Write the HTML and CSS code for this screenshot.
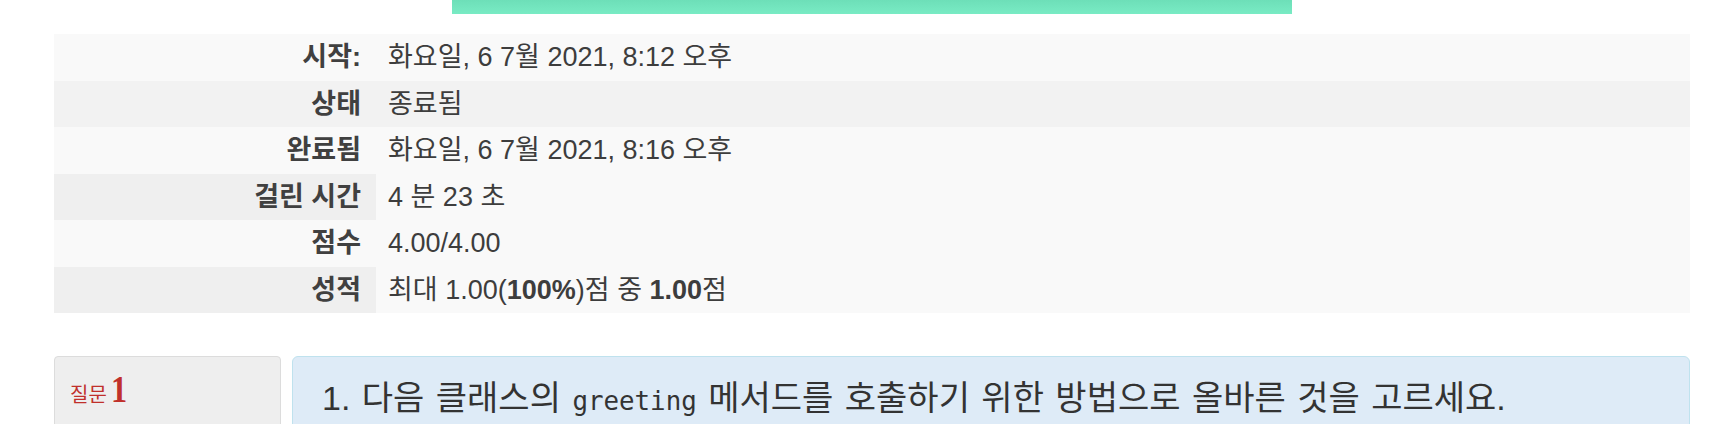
FILE: index.html
```html
<!DOCTYPE html>
<html lang="ko">
<head>
<meta charset="utf-8">
<title>퀴즈 검토</title>
<link rel="stylesheet" href="styles.css">
</head>
<body>
<div class="page">
  <div class="banner"></div>
  <table class="summary">
    <tbody>
      <tr class="r-light">
        <th>시작:</th>
        <td>화요일, 6 7월 2021, 8:12 오후</td>
      </tr>
      <tr class="r-mid">
        <th>상태</th>
        <td>종료됨</td>
      </tr>
      <tr class="r-light">
        <th>완료됨</th>
        <td>화요일, 6 7월 2021, 8:16 오후</td>
      </tr>
      <tr class="r-head">
        <th>걸린 시간</th>
        <td>4 분 23 초</td>
      </tr>
      <tr class="r-light">
        <th>점수</th>
        <td>4.00/4.00</td>
      </tr>
      <tr class="r-head">
        <th>성적</th>
        <td>최대 1.00(<b>100%</b>)점 중 <b>1.00</b>점</td>
      </tr>
    </tbody>
  </table>

  <div class="que">
    <div class="info">
      <h3 class="no">질문<span class="qno">1</span></h3>
    </div>
    <div class="formulation">
      <p class="qtext">1. 다음 클래스의 <code>greeting</code> 메서드를 호출하기 위한 방법으로 올바른 것을 고르세요.</p>
    </div>
  </div>
</div>
</body>
</html>
```

FILE: styles.css
```css
html, body {
  margin: 0;
  padding: 0;
  background: #ffffff;
}

body {
  font-family: "Liberation Sans", "Noto Sans CJK KR", sans-serif;
  color: #3d3d3d;
  overflow: hidden;
}

.page {
  padding: 0 38px 0 54px;
}

.banner {
  width: 840px;
  height: 14px;
  margin: 0 auto;
  background: linear-gradient(#6ddfb8, #79ebc4);
}

.summary {
  margin-top: 20px;
  width: 100%;
  border-collapse: collapse;
  font-size: 27px;
}

.summary th,
.summary td {
  padding: 8px 12px;
  line-height: 30.5px;
  height: 30.5px;
  background: #f9f9f9;
  white-space: nowrap;
}

.summary th {
  width: 322px;
  box-sizing: border-box;
  text-align: right;
  font-weight: bold;
  color: #404040;
  padding-right: 15px;
}

.summary td {
  text-align: left;
  font-weight: normal;
}

.summary .r-mid th,
.summary .r-mid td {
  background: #f2f2f2;
}

.summary .r-head th {
  background: #efefef;
}

.que {
  display: flex;
  gap: 11px;
  margin-top: 43px;
}

.info {
  width: 227px;
  flex: none;
  box-sizing: border-box;
  min-height: 140px;
  background: #eeeeee;
  border: 1px solid #dcdcdc;
  border-radius: 4px;
  padding: 14px 15px;
}

.no {
  margin: 0;
  font-weight: normal;
  font-size: 20px;
  line-height: 36px;
  color: #c0302b;
}

.qno {
  font-family: "Liberation Serif", serif;
  font-weight: bold;
  font-size: 38px;
  margin-left: 4px;
  display: inline-block;
  transform: scaleX(0.85);
  transform-origin: left center;
}

.formulation {
  flex: 1;
  min-height: 140px;
  background: #deebf7;
  border: 1px solid #bfe2ee;
  border-radius: 6px;
  padding: 19px 29px;
}

.qtext {
  margin: 0;
  font-size: 34px;
  line-height: 44px;
  word-spacing: 2px;
  color: #333333;
}

.qtext code {
  font-family: "DejaVu Sans Mono", "Liberation Mono", monospace;
  font-size: 0.76em;
  word-spacing: 0;
}
```
